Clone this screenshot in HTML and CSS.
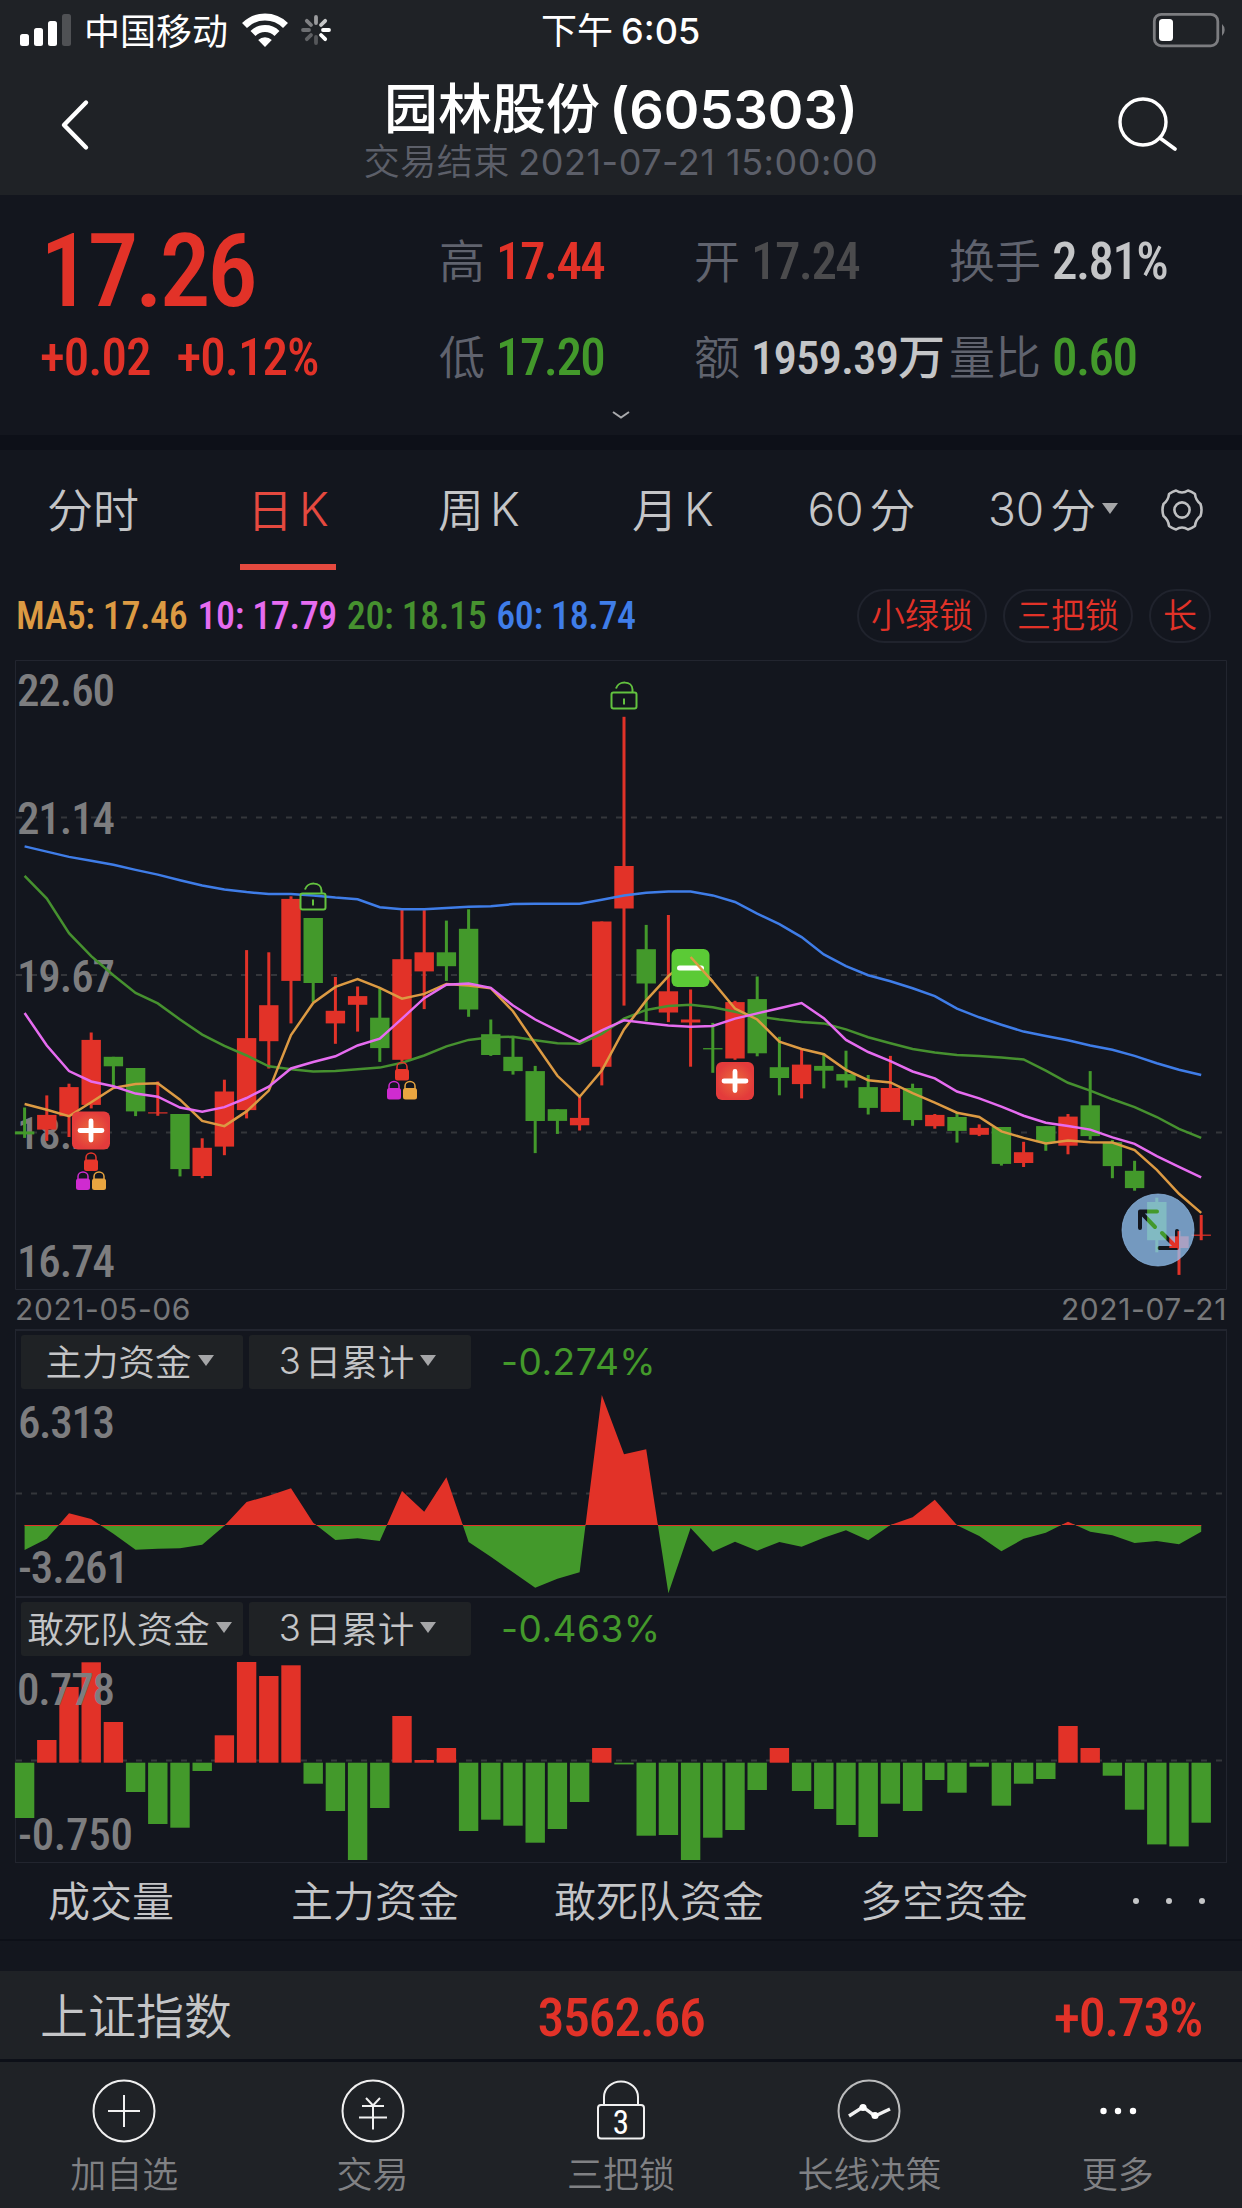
FILE: index.html
```
<!DOCTYPE html>
<html lang="zh-CN">
<head>
  <meta charset="UTF-8">
  <title>园林股份 (605303)</title>
  <link rel="stylesheet" href="styles.css">
</head>
<body>
  <header class="header">
    <div class="status">
      <svg class="signal" width="52" height="34" viewBox="0 0 52 34">
        <rect x="0" y="21" width="9" height="12" rx="2.5" fill="#fff"/>
        <rect x="14" y="15" width="9" height="18" rx="2.5" fill="#fff"/>
        <rect x="28" y="8" width="9" height="25" rx="2.5" fill="#fff"/>
        <rect x="42" y="1" width="9" height="32" rx="2.5" fill="#4f5154"/>
      </svg>
      <span class="carrier">中国移动</span>
      <svg class="wifi" width="48" height="34" viewBox="0 0 48 34">
        <path d="M3.5 12.500A29 29 0 0 1 44.500 12.500" fill="none" stroke="#fff" stroke-width="7"/>
        <path d="M12 20.500A17 17 0 0 1 36 20.500" fill="none" stroke="#fff" stroke-width="7"/>
        <path d="M24 34L17.200 27A9.500 9.500 0 0 1 30.800 27Z" fill="#fff"/>
      </svg>
      <svg class="spinner" width="32" height="32" viewBox="-16 -16 32 32">
        <g stroke-width="3.800" stroke-linecap="round">
          <path d="M0 -7V-13" stroke="#9b9c9e"/>
          <path d="M5 -5L9.200 -9.200" stroke="#c6c7c8"/>
          <path d="M7 0H13" stroke="#fff"/>
          <path d="M5 5L9.200 9.200" stroke="#fff"/>
          <path d="M0 7V13" stroke="#55575a"/>
          <path d="M-5 5L-9.200 9.200" stroke="#606265"/>
          <path d="M-7 0H-13" stroke="#6d6f72"/>
          <path d="M-5 -5L-9.200 -9.200" stroke="#808184"/>
        </g>
      </svg>
      <span class="clock">下午 <b>6:05</b></span>
      <svg class="battery" width="76" height="36" viewBox="0 0 76 36">
        <rect x="2.300" y="2.300" width="63.500" height="31.500" rx="7" fill="none" stroke="#7c7d80" stroke-width="2.800"/>
        <rect x="7" y="7" width="14" height="22" rx="3.500" fill="#fff"/>
        <path d="M70 12a8 8 0 0 1 0 12z" fill="#7c7d80"/>
      </svg>
    </div>
    <div class="titlebar">
      <svg class="back" width="30" height="52" viewBox="0 0 30 52"><path d="M26 3.500L4 26L26 48.500" fill="none" stroke="#fff" stroke-width="4.400" stroke-linecap="round" stroke-linejoin="round"/></svg>
      <div class="title">
        <h1>园林股份 <span>(605303)</span></h1>
        <p>交易结束 <span>2021-07-21 15:00:00</span></p>
      </div>
      <svg class="search" width="62" height="56" viewBox="0 0 62 56"><circle cx="26" cy="26" r="23" fill="none" stroke="#fff" stroke-width="3.400"/><path d="M43 42L58 53" stroke="#fff" stroke-width="3.800" stroke-linecap="round"/></svg>
    </div>
  </header>

  <section class="quote">
    <div class="quote-price">
      <div class="last num">17.26</div>
      <div class="change num"><span>+0.02</span><span>+0.12%</span></div>
    </div>
    <div class="quote-grid">
      <div><label>高</label><b class="num up">17.44</b></div>
      <div><label>开</label><b class="num flat">17.24</b></div>
      <div><label>换手</label><b class="num">2.81%</b></div>
      <div><label>低</label><b class="num down">17.20</b></div>
      <div><label>额</label><b class="num amount">1959.39万</b></div>
      <div><label>量比</label><b class="num down">0.60</b></div>
    </div>
    <svg class="more-arrow" width="20" height="10" viewBox="0 0 20 10"><path d="M2 2L10 7.500L18 2" fill="none" stroke="#a9aaad" stroke-width="2"/></svg>
  </section>

  <nav class="periods">
    <a>分时</a>
    <a class="active">日<i>K</i></a>
    <a>周<i>K</i></a>
    <a>月<i>K</i></a>
    <a><i class="n">60</i>分</a>
    <a class="drop"><i class="n">30</i>分<em class="tri"></em></a>
    <svg width="46" height="46" viewBox="-23 -23 46 46">
      <path id="gear" fill="none" stroke="#bfc0c2" stroke-width="2.600" stroke-linejoin="round" d="M-6 -19.500Q0 -15.500 6 -19.500Q9.500 -18.500 13 -16Q13.500 -10 18.500 -6Q20.500 0 18.500 6Q13.500 10 13 16Q9.500 18.500 6 19.500Q0 15.500 -6 19.500Q-9.500 18.500 -13 16Q-13.500 10 -18.500 6Q-20.500 0 -18.500 -6Q-13.500 -10 -13 -16Q-9.500 -18.500 -6 -19.500Z"/>
      <circle r="7.600" fill="none" stroke="#bfc0c2" stroke-width="2.600"/>
    </svg>
  </nav>

  <div class="legend">
    <div class="ma num">
      <span class="ma5">MA5: 17.46</span>
      <span class="ma10">10: 17.79</span>
      <span class="ma20">20: 18.15</span>
      <span class="ma60">60: 18.74</span>
    </div>
    <div class="pills"><span>小绿锁</span><span>三把锁</span><span>长</span></div>
  </div>

  <svg class="kline" id="kline" width="1242" height="630" viewBox="0 0 1242 630">
    <defs>
      <radialGradient id="plusBg"><stop offset="0" stop-color="#ea6b3c"/><stop offset="1" stop-color="#e33b3b"/></radialGradient>
      <g id="openLock" fill="none" stroke="#63c23f" stroke-width="2">
        <rect x="-12.500" y="0" width="25" height="16" rx="2"/>
        <path d="M-8 -4C-6 -12 8.500 -12 8.500 -3V0M0 6V12"/>
      </g>
      <g id="smallLock">
        <path d="M-5 8V5A5 4.500 0 0 1 5 5V8" fill="none" stroke="currentColor" stroke-width="1.500"/>
        <rect x="-7" y="7" width="14" height="11.500" rx="2.500" fill="currentColor"/>
      </g>
      <g id="threeLocks">
        <use href="#smallLock" color="#e8372b"/>
        <use href="#smallLock" x="-8" y="19" color="#cf2bd0"/>
        <use href="#smallLock" x="8" y="19" color="#e9a540"/>
      </g>
      <g id="buyMark">
        <rect x="-19" y="-19" width="38" height="38" rx="6" fill="url(#plusBg)"/>
        <path d="M-11 0H11M0 -9.500V9.500" stroke="#fff" stroke-width="4.800" stroke-linecap="round"/>
      </g>
      <mask id="arrows">
        <rect x="1110" y="520" width="100" height="100" fill="#fff"/>
        <path d="M1157 551.500H1140V568M1141 552.500L1155 567M1162 573L1177 588M1177 571V588H1159.500" fill="none" stroke="#000" stroke-width="4" stroke-linecap="round" stroke-linejoin="round"/>
      </mask>
    </defs>
    <path class="frame" d="M15.500 0.500H1226.500V629.500H15.500Z"/>
    <path class="grid" d="M16 157.500H1226M16 315H1226M16 472.500H1226"/>
    <g class="axis">
      <text x="17" y="46" textLength="98">22.60</text>
      <text x="17" y="174" textLength="98">21.14</text>
      <text x="17" y="332" textLength="98">19.67</text>
      <text x="17" y="489" textLength="98">18.21</text>
      <text x="17" y="616.500" textLength="98">16.74</text>
    </g>
    <g id="candles"></g>
    <g id="lines"></g>
    <use href="#openLock" x="313" y="233.500"/>
    <use href="#openLock" x="624" y="32.500"/>
    <use href="#threeLocks" x="91" y="492.500"/>
    <use href="#threeLocks" x="402" y="402"/>
    <use href="#buyMark" x="91" y="470.500"/>
    <use href="#buyMark" x="735" y="421"/>
    <rect x="671.500" y="289" width="38" height="38" rx="6" fill="#5bca36"/>
    <path d="M679.500 308H701.500" stroke="#fff" stroke-width="5" stroke-linecap="round"/>
    <path d="M690.600 297L712.800 321.700" stroke="#dc9a43" stroke-width="2.500"/>
    <circle cx="1158" cy="570" r="36" fill="#95c5f5" fill-opacity="0.750" stroke="#8fb9e6" stroke-opacity="0.700" mask="url(#arrows)"/>
  </svg>
  <div class="dates"><span>2021-05-06</span><span>2021-07-21</span></div>

  <section class="panel">
    <div class="panel-head">
      <button>主力资金<em class="tri"></em></button>
      <button><i>3</i>日累计<em class="tri"></em></button>
      <span>-0.274%</span>
    </div>
    <svg width="1242" height="207" viewBox="0 0 1242 207">
      <clipPath id="above"><rect x="0" y="0" width="1242" height="137"/></clipPath>
      <clipPath id="below"><rect x="0" y="135" width="1242" height="72"/></clipPath>
      <path class="grid" d="M16 104.500H1226"/>
      <g id="mainFund"></g>
      <g class="axis">
        <text x="18" y="49" textLength="97">6.313</text>
        <text x="18" y="194" textLength="111">-3.261</text>
      </g>
    </svg>
  </section>
  <section class="panel second">
    <div class="panel-head">
      <button>敢死队资金<em class="tri"></em></button>
      <button><i>3</i>日累计<em class="tri"></em></button>
      <span>-0.463%</span>
    </div>
    <svg width="1242" height="206" viewBox="0 0 1242 206">
      <path class="grid" d="M16 104.500H1226"/>
      <g id="bars"></g>
      <g class="axis">
        <text x="17" y="49" textLength="98">0.778</text>
        <text x="18" y="194" textLength="115">-0.750</text>
      </g>
    </svg>
  </section>

  <nav class="indicators">
    <a>成交量</a><a>主力资金</a><a>敢死队资金</a><a>多空资金</a>
    <svg width="80" height="10" viewBox="0 0 80 10" fill="#c4c5c7"><circle cx="7" cy="5" r="3"/><circle cx="40" cy="5" r="3"/><circle cx="73" cy="5" r="3"/></svg>
  </nav>

  <div class="index-bar">
    <span class="name">上证指数</span>
    <span class="num">3562.66</span>
    <span class="num pct">+0.73%</span>
  </div>

  <footer class="tabbar">
    <a>
      <svg viewBox="-33 -33 66 66"><circle r="30.500"/><path d="M-16 0H16M0 -16V16"/></svg>
      <span>加自选</span>
    </a>
    <a>
      <svg viewBox="-33 -33 66 66"><circle r="30.500"/><path d="M-7 -13L0 -5.500L7 -13M-11 -5H11M-14 6.500H14M0 -5.500V18.500"/></svg>
      <span>交易</span>
    </a>
    <a>
      <svg viewBox="-33 -33 66 66"><rect x="-23" y="-6" width="46" height="33.500" rx="3"/><path d="M-17 -6V-14A17 15.500 0 0 1 17 -14V-6"/><text x="0" y="23">3</text></svg>
      <span>三把锁</span>
    </a>
    <a>
      <svg viewBox="-33 -33 66 66"><circle r="30.500" opacity="0.750"/><path d="M-20 5L-6 -4L6 5L21 -2" stroke-width="3.400"/><g class="dot"><circle cx="-6" cy="-3.500" r="3.600"/><circle cx="6" cy="4.500" r="3.600"/></g></svg>
      <span>长线决策</span>
    </a>
    <a>
      <svg viewBox="-33 -33 66 66"><g class="dot"><circle cx="-14.500" r="3.200"/><circle r="3.200"/><circle cx="15" r="3.200"/></g></svg>
      <span>更多</span>
    </a>
  </footer>

  <script src="chart.js"></script>
</body>
</html>
```
FILE: styles.css
```
* {
  box-sizing: border-box;
}
body {
  margin: 0;
  width: 1242px;
  height: 2208px;
  overflow: hidden;
  background: #13161e;
  color: #c4c5c7;
  font-family: "Noto Sans CJK SC", sans-serif;
  font-weight: 350;
}
svg {
  display: block;
  flex: none;
}
i, em {
  font-style: normal;
}
.num {
  font-family: Roboto, "Noto Sans CJK SC", sans-serif;
  font-stretch: 75%;
  font-weight: 500;
}

/* status bar + title */
.header {
  height: 195px;
  background: #1f2226;
  color: #fff;
}
.status {
  height: 60px;
  padding: 0 14px 0 20px;
  display: flex;
  align-items: center;
  font-size: 36px;
  font-weight: 400;
}
.carrier {
  margin-left: 12px;
  line-height: 58px;
  margin-top: -2px;
}
.wifi {
  margin-left: 13px;
}
.spinner {
  margin-left: 11px;
}
.clock {
  margin-left: 209px;
  margin-top: -2px;
  line-height: 58px;
}
.clock b {
  font-family: Inter, sans-serif;
  font-weight: 500;
}
.battery {
  margin-left: auto;
}
.titlebar {
  height: 135px;
  padding: 0 63px 0 60px;
  display: flex;
  justify-content: space-between;
}
.back {
  margin-top: 39px;
}
.search {
  margin-top: 36px;
}
.title {
  text-align: center;
  padding-left: 35px;
}
.title h1 {
  margin: 15px 0 0;
  font-size: 54px;
  font-weight: 500;
  line-height: 62px;
  white-space: nowrap;
}
.title h1 span {
  font-family: Inter, sans-serif;
  font-weight: 600;
  margin-left: -3px;
}
.title p {
  margin: 0;
  font-size: 36px;
  line-height: 36px;
  letter-spacing: 0.5px;
  color: #5c5f69;
}
.title p span {
  font-family: Inter, sans-serif;
  font-weight: 400;
}

/* quote */
.quote {
  position: relative;
  height: 255px;
  border-bottom: 15px solid #0d1018;
  display: flex;
}
.quote-price {
  width: 439px;
  padding-left: 40px;
  color: #e23228;
}
.last {
  margin-top: 24px;
  font-size: 102px;
  line-height: 104px;
  letter-spacing: -3.600px;
}
.change {
  margin-top: 10px;
  font-size: 51px;
  line-height: 50px;
  letter-spacing: -1px;
}
.change span {
  margin-right: 26px;
}
.quote-grid {
  display: grid;
  grid-template-columns: 255px 255px 290px;
  grid-template-rows: 96px 96px;
  padding-top: 19px;
}
.quote-grid div {
  display: flex;
  align-items: center;
  white-space: nowrap;
}
.quote-grid label {
  font-size: 46px;
  line-height: 88px;
  margin: -8px 11px 0 0;
  color: #60636e;
}
.quote-grid b {
  font-size: 51px;
  line-height: 96px;
  letter-spacing: -1.600px;
}
.quote-grid b.amount {
  font-size: 47px;
  letter-spacing: -1px;
}
.up {
  color: #e23228;
}
.down {
  color: #43992b;
}
.flat {
  color: #4b4b4d;
}
.more-arrow {
  position: absolute;
  left: 611px;
  bottom: 15px;
}

/* period tabs */
.periods {
  height: 122px;
  display: grid;
  grid-template-columns: 191px 199px 183px 205px 172px 211px 46px;
  font-size: 46px;
  line-height: 114px;
}
.periods a {
  position: relative;
  display: flex;
  justify-content: center;
  padding-right: 5px;
}
.periods i {
  font-family: Inter, sans-serif;
  line-height: 118px;
  margin-left: 6px;
}
.periods i.n {
  margin: 0 6px 0 0;
}
.periods .active {
  color: #e5493f;
}
.periods .active::after {
  content: "";
  position: absolute;
  left: 49px;
  bottom: 2px;
  width: 96px;
  height: 6px;
  background: #e5493f;
}
.periods .drop {
  justify-content: flex-start;
  padding-left: 38px;
}
.periods .tri {
  margin-top: 53px;
}
.periods svg {
  margin-top: 37px;
  margin-left: -2px;
}
.tri {
  height: 0;
  border: 8px solid transparent;
  border-top: 11px solid #a5a6a8;
  border-bottom: 0;
  margin-left: 6px;
}

/* moving averages and pills */
.legend {
  height: 88px;
  padding: 0 31px 0 16px;
  display: flex;
  align-items: center;
  justify-content: space-between;
}
.ma {
  display: flex;
  gap: 10px;
  font-size: 38px;
  letter-spacing: -0.400px;
  white-space: nowrap;
}
.ma5 { color: #dc9a43; }
.ma10 { color: #e66cf0; }
.ma20 { color: #46912f; }
.ma60 { color: #3f7de8; }
.pills {
  display: flex;
  gap: 16px;
}
.pills span {
  height: 54px;
  padding: 0 12px;
  border: 2px solid #20232d;
  border-radius: 27px;
  font-size: 34px;
  line-height: 46px;
  color: #e23228;
}

/* charts */
.frame {
  fill: none;
  stroke: #22252f;
}
.grid {
  stroke: #34363b;
  stroke-width: 2;
  stroke-dasharray: 6 9;
}
.axis {
  fill: #7d7d7f;
  font-family: Roboto, sans-serif;
  font-stretch: 75%;
  font-weight: 500;
  font-size: 45px;
}
.dates {
  height: 39px;
  padding: 0 15px;
  display: flex;
  justify-content: space-between;
  font: 400 30px/38px Inter, sans-serif;
  letter-spacing: 0.600px;
  color: #77787a;
}
.panel {
  height: 267px;
  background: linear-gradient(#22252f, #22252f) 15px 0 / 1px 100% no-repeat,
    linear-gradient(#22252f, #22252f) 1226px 0 / 1px 100% no-repeat,
    linear-gradient(#22252f, #22252f) 15px 0 / 1212px 2px no-repeat;
}
.second {
  background: linear-gradient(#22252f, #22252f) 15px 0 / 1px 100% no-repeat,
    linear-gradient(#22252f, #22252f) 1226px 0 / 1px 100% no-repeat,
    linear-gradient(#22252f, #22252f) 15px 0 / 1212px 2px no-repeat,
    linear-gradient(#22252f, #22252f) 15px 100% / 1212px 1px no-repeat;
}
.panel-head {
  height: 60px;
  padding: 6px 0 0 21px;
  display: flex;
}
.panel-head button {
  width: 222px;
  height: 54px;
  margin-right: 6px;
  padding: 0 5px 3px 0;
  border: 0;
  border-radius: 3px;
  background: #1f2225;
  color: #c4c5c7;
  font: 350 36.500px/50px "Noto Sans CJK SC", sans-serif;
  display: flex;
  align-items: center;
  justify-content: center;
}
.panel-head i {
  font-family: Inter, sans-serif;
  margin-right: 4px;
}
.panel-head span {
  margin-left: 24px;
  font: 400 37px/54px Inter, sans-serif;
  letter-spacing: 0.500px;
  color: #43992b;
}

/* indicator switch */
.indicators {
  height: 78px;
  padding: 0 33px 0 48px;
  display: flex;
  align-items: center;
  font-size: 42px;
  line-height: 68px;
  border-bottom: 2px solid #0d1018;
}
.indicators a {
  margin-top: -5px;
}
.indicators a:nth-child(2) { margin-left: 117px; }
.indicators a:nth-child(3) { margin-left: 95px; }
.indicators a:nth-child(4) { margin-left: 96px; }
.indicators svg {
  margin-left: auto;
}

/* bottom */
.index-bar {
  height: 91px;
  margin-top: 30px;
  padding: 0 40px 0 40px;
  background: #1f2226;
  border-bottom: 3px solid #0d1018;
  display: grid;
  grid-template-columns: 1fr 1fr 1fr;
  align-items: center;
}
.index-bar .name {
  font-size: 48px;
  line-height: 80px;
  margin-top: -5px;
}
.index-bar .num {
  margin-top: 4px;
  font-size: 54px;
  letter-spacing: -1.400px;
  color: #e23228;
  text-align: center;
}
.index-bar .pct {
  text-align: right;
}
.tabbar {
  height: 147px;
  background: #1f2226;
  display: grid;
  grid-template-columns: repeat(5, 1fr);
}
.tabbar a {
  display: flex;
  flex-direction: column;
  align-items: center;
  padding-top: 16px;
}
.tabbar svg {
  width: 66px;
  height: 66px;
  fill: none;
  stroke: #f0f0f0;
  stroke-width: 2;
}
.tabbar .dot {
  fill: #fff;
  stroke: none;
}
.tabbar text {
  font: 400 33px Roboto, sans-serif;
  font-stretch: 75%;
  text-anchor: middle;
  fill: #fff;
  stroke: none;
}
.tabbar span {
  margin-top: 4px;
  font-size: 36px;
  line-height: 48px;
  color: #808184;
}
```
FILE: chart.js
```
var RED = '#e23228', GREEN = '#43992b';
var STEP = 22.2, LEFT = 24.6;

// body top, body bottom, high, low, up?
var candles = [
  [1110,1117,1055,1125,0],[1072,1106,1027,1132,1],[1008,1075,1000,1123,1],[899,1049,882,1057,1],
  [938,960,938,1005,0],[964,1064,964,1075,0],[1066,1068,995,1074,1],[1070,1197,1070,1214,0],
  [1148,1213,1126,1218,1],[1018,1145,991,1165,1],[895,1061,692,1080,1],[819,902,697,965,1],
  [574,763,568,861,1],[618,768,618,812,0],[832,861,754,908,1],[798,818,776,880,1],
  [848,918,780,950,0],[713,945,595,950,1],[697,741,600,828,1],[697,729,624,763,0],
  [643,829,598,846,0],[886,934,852,936,0],[938,971,893,979,0],[971,1086,959,1160,0],
  [1059,1086,1059,1116,0],[1079,1096,1030,1108,1],[626,961,626,1004,1],[498,596,154,820,1],
  [690,769,634,856,0],[787,836,611,858,1],[852,859,783,961,1],[918,921,860,975,0],
  [812,942,809,945,1],[805,930,753,937,0],[962,987,892,1027,0],[956,1001,922,1034,1],
  [959,970,930,1011,0],[978,993,924,1009,0],[1008,1056,980,1071,0],[1010,1065,936,1065,1],
  [1010,1084,1000,1097,0],[1072,1098,1070,1104,1],[1077,1109,1065,1136,0],[1102,1118,1094,1121,1],
  [1100,1185,1100,1189,0],[1158,1183,1134,1192,1],[1098,1135,1098,1155,0],[1076,1143,1070,1163,1],
  [1050,1121,971,1129,0],[1135,1190,1130,1218,0],[1201,1241,1178,1247,0],[1273,1361,1263,1389,0],
  [1352,1379,1340,1441,1],[1348,1350,1303,1361,1]
];

var averages = {
  '#3f7de8': [453,465,477,486,495,507,518,531,543,552,558,563,563,566,571,575,593,598,598,595,592,591,586,585,585,585,576,566,560,557,557,566,581,608,632,662,702,729,750,764,780,798,827,847,864,880,890,900,912,922,936,953,968,980],
  '#46912f': [521,573,653,706,750,791,815,852,887,913,935,960,967,972,971,967,963,952,935,914,899,893,892,900,907,908,885,850,830,821,818,824,834,845,852,858,861,875,893,907,920,928,934,936,940,944,970,998,1016,1036,1054,1077,1104,1125],
  '#dc9a43': [1047,1060,1075,1043,1010,1001,999,1037,1086,1098,1064,1016,888,814,777,759,779,804,793,770,774,780,833,908,982,1030,970,875,808,752,708,765,827,852,903,920,932,968,992,997,1022,1044,1067,1077,1110,1125,1138,1131,1135,1136,1153,1199,1254,1298],
  '#e66cf0': [837,912,971,995,1006,1023,1030,1055,1065,1054,1033,1007,965,950,937,912,896,850,803,772,769,779,820,852,878,903,877,854,860,866,869,867,850,838,826,814,849,899,927,948,972,988,1018,1034,1053,1074,1090,1098,1106,1124,1139,1167,1192,1216]
};

var mainFund = [690,656,580,597,641,689,686,685,674,617,546,527,505,608,660,655,663,513,575,472,666,710,757,803,776,757,225,403,388,820,624,695,665,692,666,680,653,631,661,615,592,539,616,648,694,656,638,605,635,646,669,663,673,635];

var dareFund = [684,450,291,217,396,606,702,713,543,436,216,258,226,581,663,810,654,378,510,474,723,689,707,758,717,636,474,523,737,735,810,743,720,600,474,603,657,705,741,641,663,570,608,530,647,581,567,408,474,557,659,763,769,698];

function x(i) { return LEFT + i * STEP; }
function y(v) { return v / 2.306 - 10; }
function rect(l, t, w, h, color) {
  return '<rect x="' + l.toFixed(1) + '" y="' + t.toFixed(1) + '" width="' + w + '" height="' + h.toFixed(1) + '" fill="' + color + '"/>';
}

var out = '';
candles.forEach(function (c, i) {
  var color = c[4] ? RED : GREEN;
  out += rect(x(i) - 1.5, y(c[2]), 3, y(c[3]) - y(c[2]), color);
  out += rect(x(i) - 9.7, y(c[0]), 19.4, Math.max(1.2, y(c[1]) - y(c[0])), color);
});
document.getElementById('candles').innerHTML = out;

out = '';
for (var color in averages) {
  var pts = averages[color].map(function (v, i) { return x(i).toFixed(1) + ',' + y(v).toFixed(1); });
  out += '<polyline points="' + pts.join(' ') + '" fill="none" stroke="' + color + '" stroke-width="2.5"/>';
}
document.getElementById('lines').innerHTML = out;

// area chart, zero line at 136
var area = 'M' + x(0) + ' 136';
mainFund.forEach(function (v, i) {
  area += 'L' + x(i).toFixed(1) + ' ' + (v / 3 - 69).toFixed(1);
});
area += 'L' + x(53) + ' 136Z';
document.getElementById('mainFund').innerHTML =
  '<path d="' + area + '" fill="' + GREEN + '" clip-path="url(#below)"/>' +
  '<path d="' + area + '" fill="' + RED + '" clip-path="url(#above)"/>';

// bars, zero line at 518 / 3
out = '';
dareFund.forEach(function (v, i) {
  var up = v < 518;
  out += rect(x(i) - 9.7, Math.min(v, 518) / 3 - 66, 19.4, Math.abs(v - 518) / 3, up ? RED : GREEN);
});
document.getElementById('bars').innerHTML = out;
```
